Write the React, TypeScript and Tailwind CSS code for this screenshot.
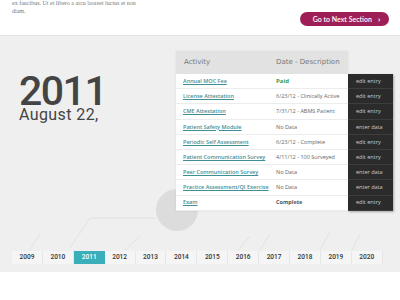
import React from 'react';

const rows = [
  { name: 'Annual MOC Fee', date: 'Paid', action: 'edit entry', kind: 'paid' },
  { name: 'License Attestation', date: '6/23/12 - Clinically Active', action: 'edit entry' },
  { name: 'CME Attestation', date: '7/31/12 - ABMS Patient', action: 'edit entry' },
  { name: 'Patient Safety Module', date: 'No Data', action: 'enter data' },
  { name: 'Periodic Self Assessment', date: '6/23/12 - Complete', action: 'edit entry' },
  { name: 'Patient Communication Survey', date: '4/11/12 - 100 Surveyed', action: 'edit entry' },
  { name: 'Peer Communication Survey', date: 'No Data', action: 'enter data' },
  { name: 'Practice Assessment/QI Exercise', date: 'No Data', action: 'enter data' },
  { name: 'Exam', date: 'Complete', action: 'edit entry', kind: 'bold' },
];

const years = [2009, 2010, 2011, 2012, 2013, 2014, 2015, 2016, 2017, 2018, 2019, 2020];

const App: React.FC = () => {
  return (
    <div className="w-[400px] h-[300px] bg-white overflow-hidden relative font-['Open_Sans',sans-serif]">
      {/* Intro strip */}
      <div className="h-[36px] flex justify-between border-b border-[#e4e4e4]">
        <p className="pl-[12px] pt-0 text-[6px] leading-[7.5px] text-[#777] font-['Liberation_Serif',serif] w-[140px]">
          ex faucibus. Ut et libero a arcu laoreet luctus et non diam.
        </p>
        <button className="mt-[12px] mr-[11px] h-[14px] w-[89px] shrink-0 rounded-full bg-[#9e1f57] text-white text-[7px] font-['Lato',sans-serif] font-semibold flex items-center justify-center gap-[6px] pl-[4px]">
          Go to Next Section
          <span className="text-[8px] font-bold leading-none">›</span>
        </button>
      </div>

      {/* Timeline panel */}
      <div className="h-[236px] bg-[#efefef] relative">
        <svg className="absolute left-0 top-0" width="400" height="236">
          <circle cx="177" cy="174" r="21" fill="#dcdcdc" />
          <path d="M90 182 L156 182 M90 182 L70 212 M40 198 L30 214 M140 200 L125 214 M270 198 L260 214 M330 196 L320 214 M360 198 L352 214 M250 200 L238 214" stroke="#dedede" strokeWidth="0.8" fill="none" />
        </svg>

        <div className="relative flex pt-[15px]">
          <div className="w-[176px] pl-[19px] pt-[24px] text-[#444] font-['Roboto',sans-serif]">
            <div className="text-[41px] leading-[33px] font-medium tracking-[-1.5px]">2011</div>
            <div className="mt-[1px] text-[16px] leading-[12px] font-normal tracking-[0.4px]">August 22,</div>
          </div>

          <div className="flex items-start">
            <div className="w-[172px] bg-white shadow-[0_0_2px_rgba(0,0,0,0.08)]">
              <div className="h-[23px] bg-[#e2e2e2] flex items-center text-[7px] text-[#777] font-['DejaVu_Sans',sans-serif]">
                <span className="w-[100px] pl-[8px]">Activity</span>
                <span>Date - Description</span>
              </div>
              {rows.map((r, i) => (
                <div key={i} className="h-[15.2px] flex items-center border-b border-[#ececec] text-[5.5px]">
                  <span className="w-[100px] pl-[7px] text-[#3f8f96] underline font-semibold whitespace-nowrap">{r.name}</span>
                  <span className={r.kind === 'paid' ? 'text-[#2f9c5a] font-bold text-[6px]' : r.kind === 'bold' ? 'text-[#555] font-bold' : 'text-[#666]'}>
                    {r.date}
                  </span>
                </div>
              ))}
            </div>
            <div className="mt-[23px] w-[45px] bg-[#2b2b2b] shadow-[1px_1px_2px_rgba(0,0,0,0.3)]">
              {rows.map((r, i) => (
                <div key={i} className="h-[15.2px] flex items-center pl-[8px] text-[5.5px] text-[#ccc] border-b border-[#3d3d3d]">
                  {r.action}
                </div>
              ))}
            </div>
          </div>
        </div>

        <div className="absolute left-[12px] top-[215px] flex">
          {years.map((y) => (
            <div
              key={y}
              className={
                y === 2011
                  ? 'w-[30.9px] h-[13px] flex items-center justify-center text-[6.5px] font-medium bg-[#3aafb9] text-white font-["Roboto",sans-serif]'
                  : 'w-[30.9px] h-[13px] flex items-center justify-center text-[6.5px] font-medium bg-[#f5f5f5] text-[#333] border-r border-[#e6e6e6] font-["Roboto",sans-serif]'
              }
            >
              {y}
            </div>
          ))}
        </div>
      </div>
    </div>
  );
};

export default App;
